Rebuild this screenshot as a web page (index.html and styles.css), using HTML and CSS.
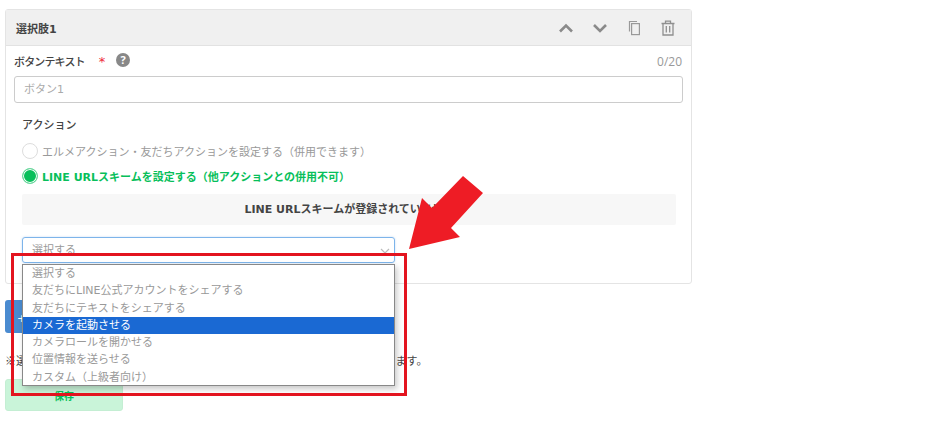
FILE: index.html
```html
<!DOCTYPE html>
<html lang="ja">
<head>
<meta charset="utf-8">
<title>選択肢1</title>
<link rel="stylesheet" href="styles.css">
</head>
<body>
<main class="page">
  <section class="card">
    <header class="card-head">
      <h2 class="card-title">選択肢1</h2>
      <div class="tools">
        <svg class="tool" width="16" height="16" viewBox="0 0 16 16"><path d="M2 11.5 8 5.5l6 6" fill="none" stroke="#8a8a8a" stroke-width="2.6"/></svg>
        <svg class="tool" width="16" height="16" viewBox="0 0 16 16"><path d="M2 5l6 6 6-6" fill="none" stroke="#8a8a8a" stroke-width="2.6"/></svg>
        <svg class="tool" width="16" height="16" viewBox="0 0 16 16"><path d="M11 1.5H3.5v10" fill="none" stroke="#999" stroke-width="1.2"/><rect x="5.6" y="3.6" width="7.8" height="11" fill="#f0f0f0" stroke="#999" stroke-width="1.2"/></svg>
        <svg class="tool" width="16" height="16" viewBox="0 0 16 16"><path d="M1.5 3.5h13M5.5 3.5V1.2h5v2.3M3 3.5V15h10V3.5M6.3 6v6.5M9.7 6v6.5" fill="none" stroke="#8f8f8f" stroke-width="1.3"/></svg>
      </div>
    </header>
    <div class="card-body">
      <div class="label-row">
        <label class="field-label">ボタンテキスト</label>
        <span class="required">*</span>
        <svg class="help" width="14" height="14" viewBox="0 0 14 14"><circle cx="7" cy="7" r="7" fill="#888"/><text x="7" y="11" text-anchor="middle" class="help-mark">?</text></svg>
        <span class="counter">0/20</span>
      </div>
      <div class="text-input">ボタン1</div>
      <div class="action">
        <h3 class="action-title">アクション</h3>
        <div class="radio-row">
          <span class="radio"></span>
          <span class="radio-text">エルメアクション・友だちアクションを設定する（併用できます）</span>
        </div>
        <div class="radio-row on">
          <span class="radio"></span>
          <span class="radio-text">LINE URLスキームを設定する（他アクションとの併用不可）</span>
        </div>
        <div class="notice">LINE URLスキームが登録されていません</div>
        <div class="select">選択する<svg class="caret" width="10" height="6" viewBox="0 0 10 6"><path d="M1 1l4 4 4-4" fill="none" stroke="#bbb" stroke-width="1.2"/></svg></div>
      </div>
    </div>
  </section>
  <button class="add-btn">+ 選択肢を追加</button>
  <p class="note">※選択肢は、ボタンを押した際のアクションを必ず1つのみ設定することができます。</p>
  <button class="save-btn">保存</button>

  <ul class="dropdown">
    <li>選択する</li>
    <li>友だちにLINE公式アカウントをシェアする</li>
    <li>友だちにテキストをシェアする</li>
    <li class="active">カメラを起動させる</li>
    <li>カメラロールを開かせる</li>
    <li>位置情報を送らせる</li>
    <li>カスタム（上級者向け）</li>
  </ul>
  <div class="callout-box"></div>
  <svg class="callout-arrow" width="70" height="80" viewBox="0 0 70 80"><polygon points="1,74 52,62 43,53 75,18 55,1 24,33 14,23" fill="#ee1c25"/></svg>
</main>
</body>
</html>
```

FILE: styles.css
```css
* { box-sizing: border-box; }
html, body { margin: 0; padding: 0; background: #fff; }
body {
  font-family: "DejaVu Sans", "Noto Sans CJK JP", sans-serif;
  font-size: 11px;
  color: #444;
  overflow: hidden;
}
.page { position: relative; width: 940px; height: 425px; padding: 9px 0 0 5px; overflow: hidden; }

.card { width: 687px; height: 275px; border: 1px solid #e4e4e4; border-radius: 3px; }
.card-head {
  height: 36px;
  background: #f0f0f0;
  border-bottom: 1px solid #e2e2e2;
  display: flex;
  align-items: center;
  justify-content: space-between;
  padding: 0 15px 0 10px;
}
.card-title { margin: 0; font-size: 11px; font-weight: 700; color: #444; }
.tools { display: flex; gap: 18px; }
.tool { display: block; }

.card-body { padding: 0 8px; }
.label-row { display: flex; align-items: center; height: 30px; padding-right: 1px; }
.field-label { font-size: 11px; font-weight: 500; color: #444; letter-spacing: -.85px; }
.required { color: #ee2a3a; margin-left: 14px; font-size: 13px; }
.help { margin: -2px 0 0 11px; }
.help-mark { font: 700 11px "Open Sans", sans-serif; fill: #fff; }
.counter { margin-left: auto; font-family: "Open Sans", sans-serif; font-size: 12px; color: #999; }
.text-input {
  height: 27px;
  border: 1px solid #ccc;
  border-radius: 3px;
  padding: 0 9px;
  line-height: 25px;
  color: #aaa;
}

.action { padding: 14px 7px 0 8px; }
.action-title { margin: 0 0 3px; font-size: 11px; font-weight: 500; color: #444; line-height: 18px; }
.radio-row { display: flex; align-items: center; gap: 4px; height: 25px; color: #999; }
.radio { width: 16px; height: 16px; border: 1px solid #ddd; border-radius: 50%; background: #fff; flex: none; }
.on { color: #08bf5b; font-weight: 700; }
.on .radio { background: #08bf5b; box-shadow: inset 0 0 0 1px #fff; border-color: #6fd8a0; }
.notice {
  margin-top: 6px;
  height: 31px;
  line-height: 31px;
  background: #f7f7f7;
  border-radius: 2px;
  text-align: center;
  font-weight: 700;
  color: #444;
}
.select {
  position: relative;
  margin-top: 12px;
  width: 373px;
  height: 26px;
  border: 1px solid #7db4ea;
  border-radius: 3px;
  padding: 0 9px;
  line-height: 26px;
  color: #999;
  box-shadow: 0 0 2px rgba(125, 180, 234, .5);
}
.caret { position: absolute; right: 4px; top: 10px; }

.add-btn {
  display: block;
  margin-top: 16px;
  width: 118px;
  height: 33px;
  border: 0;
  border-radius: 3px;
  background: #4a8bd0;
  color: #fff;
  font: inherit;
  text-align: left;
  padding-left: 12px;
}
.note { margin: 19px 0 0; font-family: "Noto Sans CJK JP", sans-serif; font-size: 11px; color: #444; line-height: 17px; white-space: nowrap; }
.save-btn {
  display: block;
  margin-top: 10px;
  width: 118px;
  height: 32px;
  border: 1px solid #c4eed3;
  border-radius: 3px;
  background: #c9f4d9;
  color: #08bf5b;
  font: inherit;
  font-size: 10px;
  font-weight: 700;
}

.dropdown {
  position: absolute;
  left: 22px;
  top: 264px;
  width: 373px;
  height: 122px;
  margin: 0;
  padding: 0;
  list-style: none;
  background: #fff;
  border: 1px solid #888;
  box-shadow: 2px 3px 6px rgba(0, 0, 0, .22);
  color: #999;
}
.dropdown li { height: 17.3px; line-height: 17px; padding-left: 9px; white-space: nowrap; }
.dropdown .active { background: #1a69d3; color: #fff; }
.callout-box { position: absolute; left: 11px; top: 253px; width: 396px; height: 143px; border: 3px solid #e3141f; }
.callout-arrow { position: absolute; left: 408px; top: 175px; overflow: visible; }
```
